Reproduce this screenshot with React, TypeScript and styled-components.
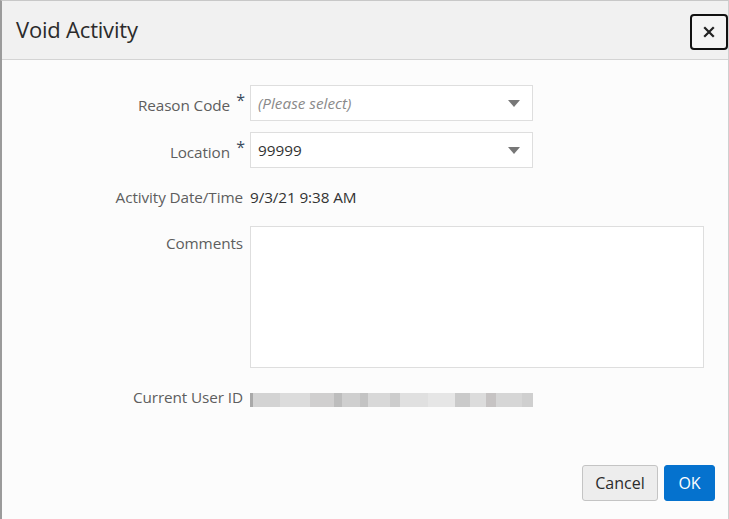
import React from "react";
import styled, { createGlobalStyle } from "styled-components";

const Global = createGlobalStyle`
  html, body { margin: 0; padding: 0; background: #fcfcfc; }
  body { font-family: "Open Sans", "Noto Sans", sans-serif; }
  * { box-sizing: border-box; }
`;

const Dialog = styled.div`
  width: 729px;
  height: 519px;
  display: flex;
  flex-direction: column;
  background: #fcfcfc;
  border-left: 2px solid #9b9b9b;
  border-top: 1px solid #c8c8c8;
  border-right: 1px solid #cfcfcf;
`;

const Header = styled.div`
  height: 59px;
  flex: none;
  display: flex;
  align-items: center;
  justify-content: space-between;
  padding: 0 0 0 14px;
  background: #f1f1f1;
  border-bottom: 1px solid #d4d4d4;
`;

const Title = styled.h1`
  margin: 0;
  font-size: 22px;
  font-weight: 400;
  color: #2b2b2b;
  letter-spacing: -0.2px;
  padding-bottom: 2px;
`;

const CloseButton = styled.button`
  width: 38px;
  height: 36px;
  margin-top: 4px;
  border: 2px solid #111;
  border-radius: 4px;
  background: #f4f4f4;
  display: flex;
  align-items: center;
  justify-content: center;
  padding: 0;
  cursor: pointer;
`;

const Body = styled.div`
  flex: 1;
  padding-top: 25px;
`;

const Form = styled.div`
  display: grid;
  grid-template-columns: 241px 1fr;
  column-gap: 7px;
  row-gap: 11px;
  align-items: center;
`;

const Label = styled.div<{ $top?: boolean }>`
  text-align: right;
  font-size: 15.3px;
  color: #5e5e5e;
  align-self: ${(p) => (p.$top ? "start" : "center")};
  padding-top: ${(p) => (p.$top ? "7px" : "0")};
  white-space: nowrap;
  letter-spacing: -0.1px;
`;

const Req = styled.span`
  display: inline-block;
  width: 15px;
  text-align: right;
  color: #3a4a5c;
  font-size: 16px;
  vertical-align: 5px;
  line-height: 1;
  margin-right: -2px;
`;

const Select = styled.div<{ $placeholder?: boolean }>`
  width: 283px;
  height: 36px;
  border: 1px solid #dedede;
  background: #fff;
  display: flex;
  align-items: center;
  justify-content: space-between;
  padding: 0 12px 0 7px;
  font-size: 15.3px;
  color: ${(p) => (p.$placeholder ? "#8a8a8a" : "#333")};
  font-style: ${(p) => (p.$placeholder ? "italic" : "normal")};
`;

const Arrow = styled.span`
  width: 0;
  height: 0;
  border-left: 6px solid transparent;
  border-right: 6px solid transparent;
  border-top: 7px solid #777;
`;

const Value = styled.div`
  height: 36px;
  display: flex;
  align-items: center;
  font-size: 15.3px;
  color: #333;
  letter-spacing: -0.1px;
`;

const TextArea = styled.div`
  width: 454px;
  height: 142px;
  border: 1px solid #dedede;
  background: #fff;
`;

const Redacted = styled.div`
  width: 283px;
  height: 14px;
  margin-top: 6px;
  background: linear-gradient(
    90deg,
    #a9a9a9 0 3px,
    #d3d3d3 3px 30px,
    #dcdcdc 30px 60px,
    #d0cfcf 60px 84px,
    #bdbdbd 84px 92px,
    #cfcfcf 92px 110px,
    #c3c3c3 110px 118px,
    #d8d8d8 118px 140px,
    #cdcdcd 140px 150px,
    #e0e0e0 150px 178px,
    #e6e6e6 178px 205px,
    #cacaca 205px 220px,
    #dcdcdc 220px 236px,
    #c6c3c3 236px 246px,
    #d6d6d6 246px 272px,
    #cfcfcf 272px 283px
  );
`;

const Footer = styled.div`
  flex: none;
  display: flex;
  justify-content: flex-end;
  gap: 6px;
  padding: 0 13px 18px 0;
`;

const Button = styled.button<{ $primary?: boolean }>`
  height: 36px;
  padding: 0 10px;
  font-family: inherit;
  font-size: 16px;
  border-radius: 3px;
  border: 1px solid ${(p) => (p.$primary ? "#0572ce" : "#c4c4c4")};
  background: ${(p) => (p.$primary ? "#0572ce" : "#ededed")};
  color: ${(p) => (p.$primary ? "#fff" : "#2b2b2b")};
  width: ${(p) => (p.$primary ? "51px" : "76px")};
  cursor: pointer;
`;

export default function App() {
  return (
    <>
      <Global />
      <Dialog>
        <Header>
          <Title>Void Activity</Title>
          <CloseButton aria-label="Close">
            <svg width="12" height="12" viewBox="0 0 12 12">
              <path d="M2 2 L10 10 M10 2 L2 10" stroke="#222" strokeWidth="2.2" strokeLinecap="square" />
            </svg>
          </CloseButton>
        </Header>
        <Body>
          <Form>
            <Label>
              Reason Code<Req>*</Req>
            </Label>
            <Select $placeholder>
              (Please select)
              <Arrow />
            </Select>
            <Label>
              Location<Req>*</Req>
            </Label>
            <Select>
              99999
              <Arrow />
            </Select>
            <Label>Activity Date/Time</Label>
            <Value>9/3/21 9:38 AM</Value>
            <Label $top>Comments</Label>
            <TextArea />
            <Label>Current User ID</Label>
            <Value>
              <Redacted />
            </Value>
          </Form>
        </Body>
        <Footer>
          <Button>Cancel</Button>
          <Button $primary>OK</Button>
        </Footer>
      </Dialog>
    </>
  );
}
